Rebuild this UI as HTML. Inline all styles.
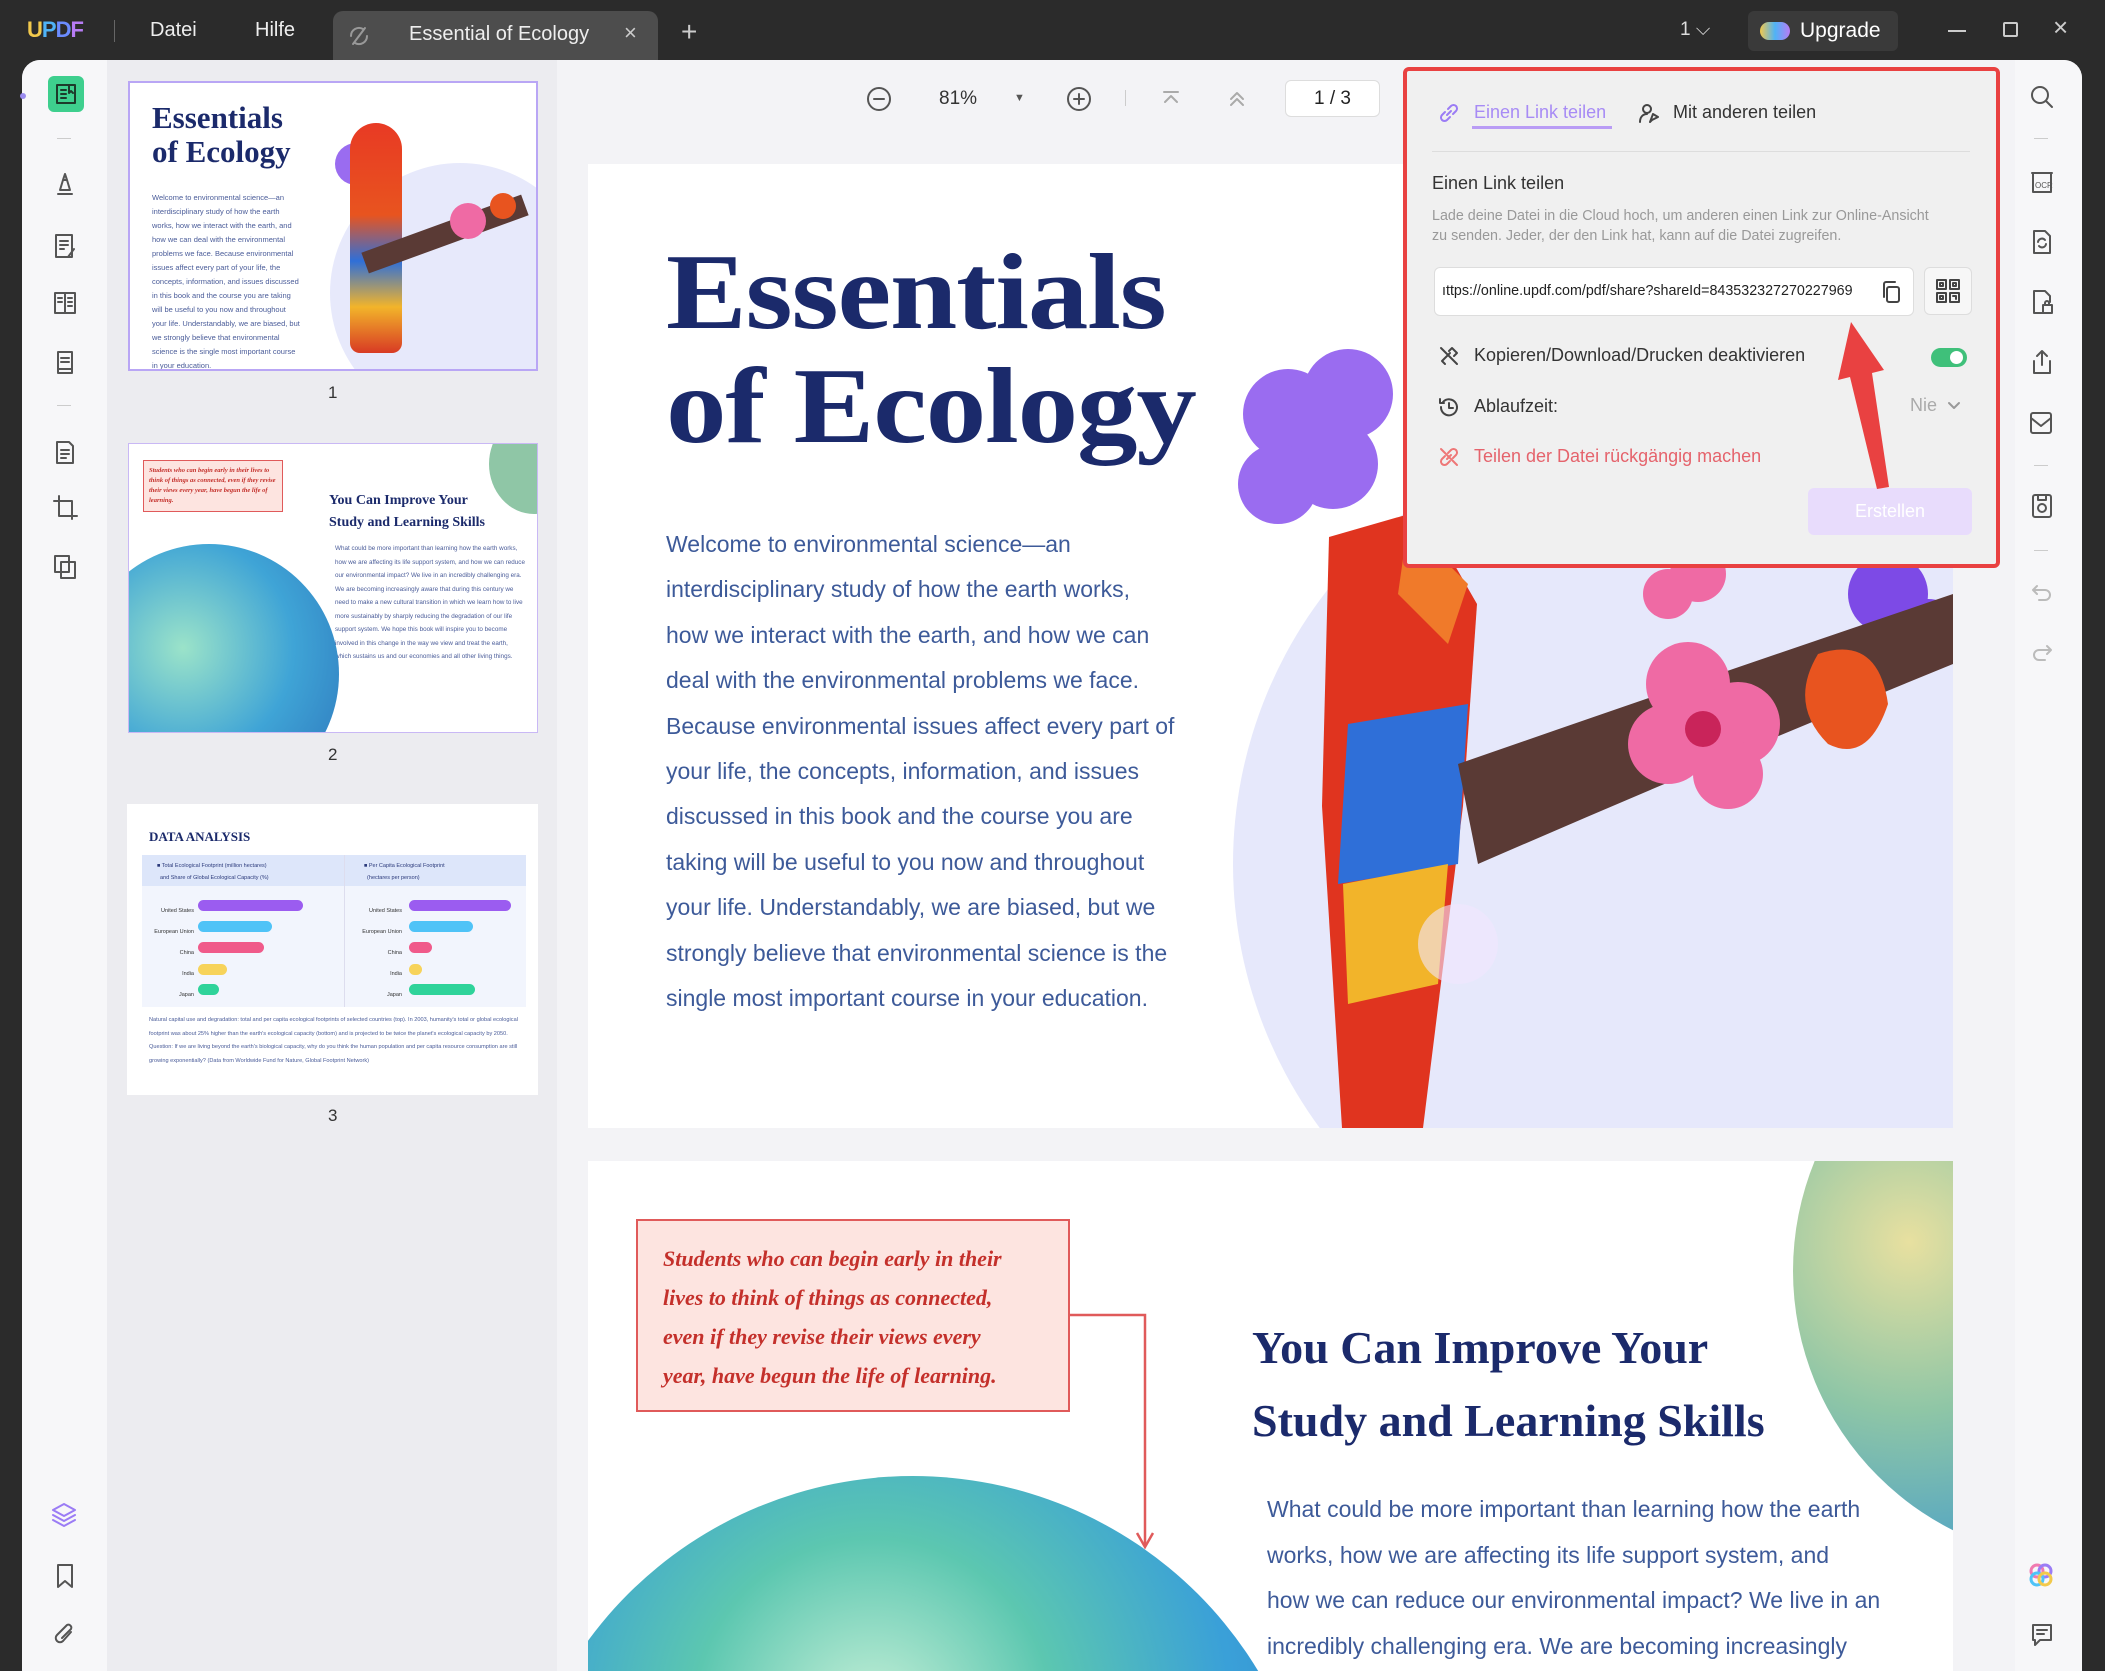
<!DOCTYPE html>
<html><head><meta charset="utf-8"><style>
*{margin:0;padding:0;box-sizing:border-box}
html,body{width:2105px;height:1671px;overflow:hidden}
body{background:#2b2b2b;font-family:"Liberation Sans",sans-serif;position:relative}
.a{position:absolute}
.ic{position:absolute;fill:none;stroke:#555;stroke-width:2;stroke-linecap:round;stroke-linejoin:round}
.serif{font-family:"Liberation Serif",serif;font-weight:bold}
</style></head><body>
<!-- title bar -->
<div class="a" style="left:27px;top:17px;font-size:22px;font-weight:bold;letter-spacing:-1px"><span style="color:#f2c94c">U</span><span style="color:#4fb3f6">P</span><span style="color:#6b8cff">D</span><span style="color:#b77cf5">F</span></div>
<div class="a" style="left:114px;top:20px;width:1px;height:22px;background:#666"></div>
<div class="a" style="left:150px;top:19px;color:#eee;font-size:20px">Datei</div>
<div class="a" style="left:255px;top:19px;color:#eee;font-size:20px">Hilfe</div>
<div class="a" style="left:333px;top:11px;width:325px;height:50px;background:#4d4d4d;border-radius:10px 10px 0 0"></div>
<svg class="ic" style="left:347px;top:24px;stroke:#999" width="24" height="24"><path d="M6 20l12-16M4 12a8 8 0 0 1 12-7M20 12a8 8 0 0 1-12 7"/></svg>
<div class="a" style="left:409px;top:23px;color:#eee;font-size:20px">Essential of Ecology</div>
<div class="a" style="left:624px;top:20px;color:#ccc;font-size:22px">×</div>
<div class="a" style="left:681px;top:16px;color:#ccc;font-size:28px">+</div>
<div class="a" style="left:1680px;top:19px;color:#ddd;font-size:19px">1 ⌵</div>
<div class="a" style="left:1748px;top:11px;width:150px;height:40px;background:#3a3a3a;border-radius:6px"></div>
<div class="a" style="left:1760px;top:22px;width:30px;height:18px;border-radius:9px;background:linear-gradient(90deg,#f2c94c,#4fb3f6,#b77cf5)"></div>
<div class="a" style="left:1800px;top:19px;color:#fff;font-size:21px">Upgrade</div>
<div class="a" style="left:1948px;top:30px;width:18px;height:2px;background:#ccc"></div>
<div class="a" style="left:2003px;top:22px;width:15px;height:15px;border:2px solid #ccc;border-radius:2px"></div>
<div class="a" style="left:2053px;top:12px;color:#ccc;font-size:26px">×</div>
<!-- window body -->
<div class="a" style="left:22px;top:60px;width:2060px;height:1611px;background:#f3f3f6;border-radius:18px 18px 0 0;overflow:hidden">
 <div class="a" style="left:0;top:0;width:85px;height:1611px;background:#f7f7f9"></div>
 <div class="a" style="left:85px;top:0;width:450px;height:1611px;background:#ececf0"></div>
 <div class="a" style="left:1993px;top:0;width:67px;height:1611px;background:#f7f7f9"></div>
</div>
<!-- left toolbar -->
<div class="a" style="left:20px;top:93px;width:6px;height:6px;border-radius:3px;background:#9b8cf0"></div>
<div class="a" style="left:48px;top:76px;width:36px;height:36px;border-radius:6px;background:#3ecf8e"></div>
<svg class="ic" style="left:54px;top:82px;stroke:#1d3a2b" width="24" height="24"><rect x="3" y="3" width="18" height="18"/><path d="M7 8h5M7 12h5M7 16h5M15 3v8l2-2 2 2"/></svg>
<div class="a" style="left:57px;top:138px;width:14px;height:1px;background:#ccc"></div>
<svg class="ic" style="left:52px;top:170px" width="26" height="28"><path d="M6 24h14M8 20l3-10h4l3 10zM11 10l2-6 2 6"/></svg>
<svg class="ic" style="left:52px;top:232px" width="26" height="28"><rect x="4" y="3" width="16" height="22"/><path d="M8 9h8M8 13h8M8 17h4M16 25l6-8"/></svg>
<svg class="ic" style="left:52px;top:289px" width="26" height="28"><rect x="3" y="4" width="20" height="20"/><path d="M13 4v20M6 9h4M6 13h4M16 9h4M16 13h4M16 17h4"/></svg>
<svg class="ic" style="left:52px;top:348px" width="26" height="28"><path d="M6 25V4h14v21zM9 10h8M9 14h8M6 21h14"/></svg>
<div class="a" style="left:57px;top:405px;width:14px;height:1px;background:#ccc"></div>
<svg class="ic" style="left:52px;top:438px" width="26" height="28"><path d="M5 4h12l4 4v17H5zM9 12h8M9 16h8M9 20h5"/></svg>
<svg class="ic" style="left:52px;top:494px" width="26" height="28"><path d="M7 2v20h18M2 7h18v18"/></svg>
<svg class="ic" style="left:52px;top:553px" width="26" height="28"><rect x="3" y="3" width="14" height="16"/><rect x="9" y="9" width="14" height="16"/></svg>
<svg class="ic" style="left:50px;top:1500px;stroke:#9b7cf5" width="28" height="28"><path d="M14 4l11 6-11 6-11-6zM3 15l11 6 11-6M3 20l11 6 11-6"/></svg>
<svg class="ic" style="left:55px;top:1563px" width="20" height="26"><path d="M3 2h14v22l-7-6-7 6z"/></svg>
<svg class="ic" style="left:53px;top:1622px" width="24" height="26"><path d="M18 10l-8 9a4 4 0 0 1-6-6l10-10a3 3 0 0 1 4 4l-9 9"/></svg>
<!-- thumbnails -->
<div class="a" style="left:128px;top:81px;width:410px;height:290px;background:#fff;border:2px solid #b9a6f5;overflow:hidden">
 <div class="a serif" style="left:22px;top:18px;font-size:31px;color:#1b2a6b;line-height:34px">Essentials<br>of Ecology</div>
 <div class="a" style="left:22px;top:108px;width:150px;font-size:7.5px;color:#4a5c99;line-height:14px">Welcome to environmental science—an interdisciplinary study of how the earth works, how we interact with the earth, and how we can deal with the environmental problems we face. Because environmental issues affect every part of your life, the concepts, information, and issues discussed in this book and the course you are taking will be useful to you now and throughout your life. Understandably, we are biased, but we strongly believe that environmental science is the single most important course in your education.</div>
 <div class="a" style="left:200px;top:80px;width:260px;height:260px;border-radius:50%;background:#e7e9fb"></div>
 <div class="a" style="left:205px;top:60px;width:42px;height:42px;border-radius:50%;background:#9a6cf0"></div>
 <div class="a" style="left:220px;top:40px;width:52px;height:230px;border-radius:26px 26px 10px 10px;background:linear-gradient(#e83a24,#e8541f 40%,#2f6fd8 60%,#f2b42a 80%,#d83a24)"></div>
 <div class="a" style="left:230px;top:140px;width:170px;height:22px;background:#5a3a35;transform:rotate(-20deg)"></div>
 <div class="a" style="left:320px;top:120px;width:36px;height:36px;border-radius:50%;background:#ef6aa4"></div>
 <div class="a" style="left:360px;top:110px;width:26px;height:26px;border-radius:50%;background:#e8541f"></div>
</div>
<div class="a" style="left:328px;top:383px;font-size:17px;color:#333">1</div>
<div class="a" style="left:128px;top:443px;width:410px;height:290px;background:#fff;border:1px solid #c9b8f5;overflow:hidden">
 <div class="a" style="left:14px;top:16px;width:140px;height:52px;background:#fde4e0;border:1px solid #e05a5a"></div>
 <div class="a serif" style="left:20px;top:22px;width:130px;font-size:6.5px;color:#c4302b;font-style:italic;line-height:10px">Students who can begin early in their lives to think of things as connected, even if they revise their views every year, have begun the life of learning.</div>
 <div class="a serif" style="left:200px;top:46px;font-size:14px;color:#1b2a6b;line-height:22px">You Can Improve Your<br>Study and Learning Skills</div>
 <div class="a" style="left:206px;top:98px;width:190px;font-size:6.3px;color:#4a5c99;line-height:13.5px">What could be more important than learning how the earth works, how we are affecting its life support system, and how we can reduce our environmental impact? We live in an incredibly challenging era. We are becoming increasingly aware that during this century we need to make a new cultural transition in which we learn how to live more sustainably by sharply reducing the degradation of our life support system. We hope this book will inspire you to become involved in this change in the way we view and treat the earth, which sustains us and our economies and all other living things.</div>
 <div class="a" style="left:-50px;top:100px;width:260px;height:260px;border-radius:50%;background:radial-gradient(circle at 40% 40%,#9be3c9,#3fa4d6 50%,#2b6fb8)"></div>
 <div class="a" style="left:360px;top:-30px;width:90px;height:100px;border-radius:50%;background:#8fc6a6"></div>
</div>
<div class="a" style="left:328px;top:745px;font-size:17px;color:#333">2</div>
<div class="a" style="left:127px;top:804px;width:411px;height:291px;background:#fff;overflow:hidden">
 <div class="a serif" style="left:22px;top:25px;font-size:13px;color:#1b2a6b">DATA ANALYSIS</div>
 <div class="a" style="left:15px;top:51px;width:384px;height:152px;background:#f2f5fd"></div>
 <div class="a" style="left:15px;top:51px;width:384px;height:31px;background:#dde6fa"></div>
 <div class="a" style="left:217px;top:51px;width:1px;height:152px;background:#dde"></div>
 <div class="a" style="left:30px;top:56px;font-size:5.5px;color:#2b3a7b;line-height:12px">■ Total Ecological Footprint (million hectares)<br>&nbsp;&nbsp;and Share of Global Ecological Capacity (%)</div>
 <div class="a" style="left:237px;top:56px;font-size:5.5px;color:#2b3a7b;line-height:12px">■ Per Capita Ecological Footprint<br>&nbsp;&nbsp;(hectares per person)</div>
 <div class="a" style="left:71px;top:96px;width:105px;height:11px;border-radius:6px;background:#9b5cf0"></div>
 <div class="a" style="left:71px;top:117px;width:74px;height:11px;border-radius:6px;background:#4fc3f7"></div>
 <div class="a" style="left:71px;top:138px;width:66px;height:11px;border-radius:6px;background:#f05a8a"></div>
 <div class="a" style="left:71px;top:160px;width:29px;height:11px;border-radius:6px;background:#f7d35a"></div>
 <div class="a" style="left:71px;top:180px;width:21px;height:11px;border-radius:6px;background:#2fd39a"></div>
 <div class="a" style="left:282px;top:96px;width:102px;height:11px;border-radius:6px;background:#9b5cf0"></div>
 <div class="a" style="left:282px;top:117px;width:64px;height:11px;border-radius:6px;background:#4fc3f7"></div>
 <div class="a" style="left:282px;top:138px;width:23px;height:11px;border-radius:6px;background:#f05a8a"></div>
 <div class="a" style="left:282px;top:160px;width:13px;height:11px;border-radius:6px;background:#f7d35a"></div>
 <div class="a" style="left:282px;top:180px;width:66px;height:11px;border-radius:6px;background:#2fd39a"></div>
 <div class="a" style="left:22px;top:97px;font-size:5.5px;color:#333;line-height:21px;width:45px;text-align:right">United States<br>European Union<br>China<br>India<br>Japan</div>
 <div class="a" style="left:230px;top:97px;font-size:5.5px;color:#333;line-height:21px;width:45px;text-align:right">United States<br>European Union<br>China<br>India<br>Japan</div>
 <div class="a" style="left:22px;top:210px;width:370px;font-size:5.6px;color:#4a5c99;line-height:13.7px">Natural capital use and degradation: total and per capita ecological footprints of selected countries (top). In 2003, humanity's total or global ecological footprint was about 25% higher than the earth's ecological capacity (bottom) and is projected to be twice the planet's ecological capacity by 2050. Question: If we are living beyond the earth's biological capacity, why do you think the human population and per capita resource consumption are still growing exponentially? (Data from Worldwide Fund for Nature, Global Footprint Network)</div>
</div>
<div class="a" style="left:328px;top:1106px;font-size:17px;color:#333">3</div>
<!-- main toolbar -->
<svg class="ic" style="left:866px;top:86px" width="26" height="26"><circle cx="13" cy="13" r="11"/><path d="M8 13h10"/></svg>
<div class="a" style="left:939px;top:88px;font-size:19px;color:#333">81%</div>
<div class="a" style="left:1014px;top:92px;font-size:11px;color:#555">▼</div>
<svg class="ic" style="left:1066px;top:86px" width="26" height="26"><circle cx="13" cy="13" r="11"/><path d="M8 13h10M13 8v10"/></svg>
<div class="a" style="left:1125px;top:90px;width:1px;height:16px;background:#ccc"></div>
<svg class="ic" style="left:1161px;top:90px;stroke:#aaa" width="20" height="18"><path d="M3 2h14M4 12l6-6 6 6"/></svg>
<svg class="ic" style="left:1227px;top:90px;stroke:#aaa" width="20" height="18"><path d="M4 9l6-6 6 6M4 15l6-6 6 6"/></svg>
<div class="a" style="left:1285px;top:80px;width:95px;height:37px;background:#fff;border:1px solid #ddd;border-radius:6px;font-size:19px;color:#222;text-align:center;line-height:35px">1 / 3</div>
<!-- page 1 -->
<div class="a" style="left:588px;top:164px;width:1365px;height:964px;background:#fff;overflow:hidden">
 <svg class="a" style="left:0;top:0" width="1365" height="964">
  <circle cx="1090" cy="700" r="445" fill="#e6e8fb"/>
  <g fill="#9a6cf0"><circle cx="700" cy="250" r="45"/><circle cx="760" cy="230" r="45"/><circle cx="745" cy="300" r="45"/><circle cx="690" cy="320" r="40"/></g>
  <g fill="#7d4ae6"><circle cx="1300" cy="430" r="40"/><circle cx="1340" cy="470" r="35"/></g>
  <g fill="#ef6aa4"><circle cx="1110" cy="410" r="28"/><circle cx="1080" cy="430" r="25"/></g>
  <path d="M741 373 L835 346 L889 440 L875 642 L835 964 L754 964 L734 642 Z" fill="#e0341f"/>
  <path d="M760 560 L880 540 L870 700 L750 720 Z" fill="#2f6fd8"/>
  <path d="M755 720 L860 700 L850 820 L760 840 Z" fill="#f2b42a"/>
  <path d="M820 360 L880 420 L860 480 L810 430 Z" fill="#f07a2a"/>
  <path d="M870 600 Q1100 520 1365 430 L1365 500 Q1120 600 890 700 Z" fill="#5a3a35"/>
  <g fill="#ef6aa4"><circle cx="1100" cy="520" r="42"/><circle cx="1150" cy="560" r="42"/><circle cx="1080" cy="580" r="40"/><circle cx="1140" cy="610" r="35"/></g>
  <circle cx="1115" cy="565" r="18" fill="#c9245a"/>
  <path d="M1230 490 Q1290 470 1300 540 Q1280 600 1240 580 Q1200 540 1230 490Z" fill="#e8541f"/>
  <circle cx="870" cy="780" r="40" fill="#f2e6ff" opacity=".6"/>
 </svg>
 <div class="a serif" style="left:78px;top:72px;font-size:108px;color:#1b2a6b;line-height:114px;letter-spacing:-1px;transform:scaleX(1.12);transform-origin:0 0">Essentials<br>of Ecology</div>
 <div class="a" style="left:78px;top:358px;width:510px;font-size:23px;color:#3d5a99;line-height:45.4px">Welcome to environmental science—an interdisciplinary study of how the earth works, how we interact with the earth, and how we can deal with the environmental problems we face. Because environmental issues affect every part of your life, the concepts, information, and issues discussed in this book and the course you are taking will be useful to you now and throughout your life. Understandably, we are biased, but we strongly believe that environmental science is the single most important course in your education.</div>
</div>
<!-- page 2 -->
<div class="a" style="left:588px;top:1161px;width:1365px;height:510px;background:#fff;overflow:hidden">
 <div class="a" style="left:-78px;top:315px;width:806px;height:806px;border-radius:50%;background:radial-gradient(circle at 45% 30%,#c8f0d8,#5cc7b0 25%,#3aa0d8 50%,#2a6fc0)"></div>
 <div class="a" style="left:1205px;top:-180px;width:580px;height:580px;border-radius:50%;background:radial-gradient(circle at 20% 45%,#e8e0a0,#8fc6a6 30%,#4aa0c8 60%)"></div>
 <div class="a" style="left:48px;top:58px;width:434px;height:193px;background:#fde4e0;border:2px solid #e05a5a"></div>
 <div class="a serif" style="left:75px;top:78px;font-size:22px;font-style:italic;color:#c4302b;line-height:39px">Students who can begin early in their<br>lives to think of things as connected,<br>even if they revise their views every<br>year, have begun the life of learning.</div>
 <svg class="a" style="left:482px;top:140px" width="100" height="260"><path d="M0 14H75V245" fill="none" stroke="#e05a5a" stroke-width="2.5"/><path d="M67 232L75 246 83 232" fill="none" stroke="#e05a5a" stroke-width="2.5"/></svg>
 <div class="a serif" style="left:664px;top:150px;font-size:46px;color:#1b2a6b;line-height:73px">You Can Improve Your<br>Study and Learning Skills</div>
 <div class="a" style="left:679px;top:326px;white-space:nowrap;font-size:23px;color:#3d5a99;line-height:45.5px">What could be more important than learning how the earth<br>works, how we are affecting its life support system, and<br>how we can reduce our environmental impact? We live in an<br>incredibly challenging era. We are becoming increasingly</div>
</div>
<!-- share panel -->
<div class="a" style="left:1403px;top:67px;width:597px;height:501px;background:#f0f0f0;border:4px solid #e94141;border-radius:6px"></div>
<svg class="ic" style="left:1437px;top:101px;stroke:#9b7cf5" width="24" height="24"><path d="M10 14l4-4M8 11l-3 3a3 3 0 0 0 5 5l3-3M16 13l3-3a3 3 0 0 0-5-5l-3 3"/></svg>
<div class="a" style="left:1474px;top:102px;font-size:18px;color:#a78bf5">Einen Link teilen</div>
<div class="a" style="left:1472px;top:126px;width:140px;height:3px;background:#b99cf5"></div>
<svg class="ic" style="left:1637px;top:101px;stroke:#444" width="24" height="24"><circle cx="10" cy="8" r="4"/><path d="M3 21c0-5 3-8 7-8M13 21l3-8 5 3-6 3z"/></svg>
<div class="a" style="left:1673px;top:102px;font-size:18px;color:#333">Mit anderen teilen</div>
<div class="a" style="left:1432px;top:151px;width:538px;height:1px;background:#ddd"></div>
<div class="a" style="left:1432px;top:173px;font-size:18px;color:#333">Einen Link teilen</div>
<div class="a" style="left:1432px;top:206px;font-size:14.3px;color:#999;line-height:20px">Lade deine Datei in die Cloud hoch, um anderen einen Link zur Online-Ansicht<br>zu senden. Jeder, der den Link hat, kann auf die Datei zugreifen.</div>
<div class="a" style="left:1434px;top:267px;width:480px;height:49px;background:#fff;border:1px solid #ddd;border-radius:6px"></div>
<div class="a" style="left:1442px;top:283px;font-size:14.3px;color:#222">ıttps://online.updf.com/pdf/share?shareId=843532327270227969</div>
<svg class="ic" style="left:1880px;top:280px;stroke:#444" width="22" height="24"><rect x="7" y="7" width="12" height="15" rx="2"/><path d="M4 17V4a2 2 0 0 1 2-2h9"/></svg>
<div class="a" style="left:1924px;top:267px;width:48px;height:48px;background:#f7f7f7;border:1px solid #ddd;border-radius:6px"></div>
<svg class="ic" style="left:1935px;top:278px;stroke:#444" width="26" height="26"><rect x="2" y="2" width="9" height="9"/><rect x="15" y="2" width="9" height="9"/><rect x="2" y="15" width="9" height="9"/><rect x="5" y="5" width="3" height="3"/><rect x="18" y="5" width="3" height="3"/><rect x="5" y="18" width="3" height="3"/><path d="M15 15h9v9h-9zM18 18h3v3"/></svg>
<svg class="ic" style="left:1437px;top:344px;stroke:#444" width="24" height="24"><path d="M4 4l16 16M8 20l-3-3 8-8M12 7l3-3 5 5-3 3"/></svg>
<div class="a" style="left:1474px;top:345px;font-size:18px;color:#333">Kopieren/Download/Drucken deaktivieren</div>
<div class="a" style="left:1931px;top:348px;width:36px;height:19px;border-radius:10px;background:#3fc07a"></div>
<div class="a" style="left:1950px;top:351px;width:13px;height:13px;border-radius:50%;background:#fff"></div>
<svg class="ic" style="left:1437px;top:395px;stroke:#444" width="24" height="24"><path d="M4 12a8 8 0 1 0 2-5M3 4v4h4M12 8v5h4"/></svg>
<div class="a" style="left:1474px;top:396px;font-size:18px;color:#333">Ablaufzeit:</div>
<div class="a" style="left:1910px;top:395px;font-size:18px;color:#aaa">Nie</div>
<svg class="ic" style="left:1947px;top:401px;stroke:#999" width="14" height="10"><path d="M2 2l5 5 5-5"/></svg>
<svg class="ic" style="left:1437px;top:445px;stroke:#e77" width="24" height="24"><path d="M10 14l4-4M8 11l-3 3a3 3 0 0 0 5 5l3-3M16 13l3-3a3 3 0 0 0-5-5l-3 3M4 4l16 16"/></svg>
<div class="a" style="left:1474px;top:446px;font-size:18px;color:#e5636c">Teilen der Datei rückgängig machen</div>
<div class="a" style="left:1808px;top:488px;width:164px;height:47px;border-radius:6px;background:#e8dcfc;color:#fff;font-size:18px;text-align:center;line-height:47px">Erstellen</div>
<svg class="a" style="left:1820px;top:315px" width="90" height="185"><path d="M69 172 L52 58 L64 55 L31 7 L18 65 L30 62 L57 174 Z" fill="#e94141"/></svg>
<!-- right toolbar -->
<svg class="ic" style="left:2029px;top:84px" width="26" height="26"><circle cx="11" cy="11" r="8"/><path d="M17 17l6 6"/></svg>
<div class="a" style="left:2034px;top:138px;width:14px;height:1px;background:#ccc"></div>
<svg class="ic" style="left:2028px;top:167px" width="28" height="28"><path d="M4 6h20M5 6v19h18V6"/><text x="7" y="21" font-size="8" fill="#555" stroke="none" font-family="Liberation Sans">OCR</text></svg>
<svg class="ic" style="left:2030px;top:228px" width="24" height="28"><path d="M4 3h11l5 5v17H4z"/><path d="M8 14a4 4 0 0 1 7-2M16 16a4 4 0 0 1-7 2"/></svg>
<svg class="ic" style="left:2030px;top:288px" width="24" height="28"><path d="M13 25H4V3h11l5 5v6"/><rect x="13" y="17" width="9" height="8"/><path d="M15 17v-2a2 2 0 0 1 4 0v2"/></svg>
<svg class="ic" style="left:2030px;top:348px" width="24" height="28"><path d="M12 3v14M7 8l5-5 5 5M4 13v12h16V13"/></svg>
<svg class="ic" style="left:2028px;top:410px" width="26" height="26"><rect x="3" y="3" width="20" height="20" rx="2"/><path d="M3 8l10 8 10-8"/></svg>
<div class="a" style="left:2034px;top:465px;width:14px;height:1px;background:#ccc"></div>
<svg class="ic" style="left:2030px;top:492px" width="24" height="28"><rect x="3" y="3" width="18" height="22" rx="2"/><circle cx="12" cy="16" r="4"/><path d="M8 3v5h8V3"/></svg>
<div class="a" style="left:2034px;top:550px;width:14px;height:1px;background:#ccc"></div>
<svg class="ic" style="left:2031px;top:582px;stroke:#bbb" width="22" height="20"><path d="M6 4L2 8l4 4M2 8h12a5 5 0 0 1 0 10H8"/></svg>
<svg class="ic" style="left:2031px;top:642px;stroke:#bbb" width="22" height="20"><path d="M16 4l4 4-4 4M20 8H8a5 5 0 0 0 0 10h6"/></svg>
<svg class="a" style="left:2027px;top:1561px" width="28" height="28"><g fill="none" stroke-width="3"><circle cx="10" cy="10" r="6" stroke="#f07ab0"/><circle cx="18" cy="10" r="6" stroke="#9b7cf5"/><circle cx="10" cy="18" r="6" stroke="#4fc3f7"/><circle cx="18" cy="18" r="6" stroke="#f2c94c"/></g></svg>
<svg class="ic" style="left:2030px;top:1622px" width="24" height="26"><path d="M3 3h18v15H10l-5 5v-5H3z"/><path d="M7 8h10M7 12h7"/></svg>
</body></html>
